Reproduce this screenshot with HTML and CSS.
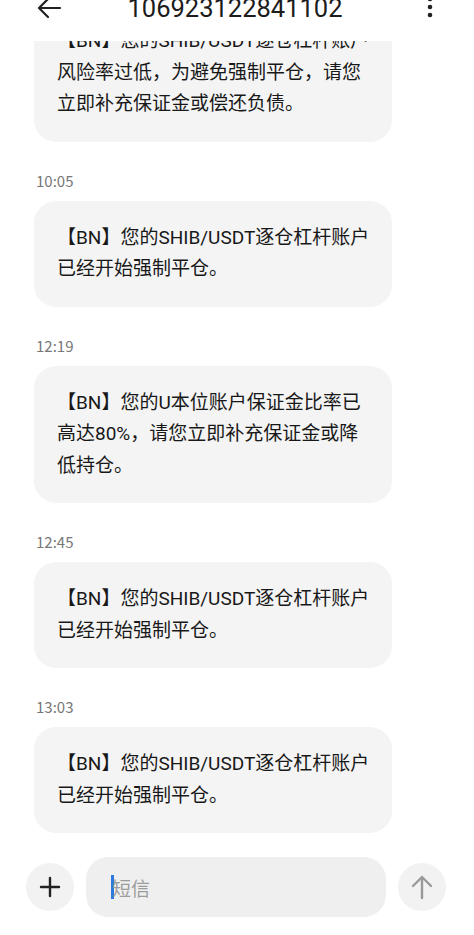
FILE: index.html
```html
<!DOCTYPE html>
<html>
<head>
    <title>106923122841102</title>
    <link rel="stylesheet" href="styles.css">
</head>
<body>
<div class="screen">
    <div class="header">
        <svg class="back-icon" width="26" height="24" viewBox="0 0 26 24">
            <path d="M24 12 H3 M12 3 L3 12 L12 21" fill="none" stroke="#222" stroke-width="2.2" stroke-linecap="round" stroke-linejoin="round"/>
        </svg>
        <div class="title">106923122841102</div>
        <svg class="menu-icon" width="8" height="24" viewBox="0 0 8 24">
            <circle cx="4" cy="2" r="2.3" fill="#222"/>
            <circle cx="4" cy="10" r="2.3" fill="#222"/>
            <circle cx="4" cy="18" r="2.3" fill="#222"/>
        </svg>
    </div>

    <div class="messages">
        <div class="message-list">
            <div class="bubble">【BN】您的SHIB/USDT逐仓杠杆账户<br>风险率过低，为避免强制平仓，请您<br>立即补充保证金或偿还负债。</div>

            <div class="time">10:05</div>
            <div class="bubble">【BN】您的SHIB/USDT逐仓杠杆账户<br>已经开始强制平仓。</div>

            <div class="time">12:19</div>
            <div class="bubble">【BN】您的U本位账户保证金比率已<br>高达80%，请您立即补充保证金或降<br>低持仓。</div>

            <div class="time">12:45</div>
            <div class="bubble">【BN】您的SHIB/USDT逐仓杠杆账户<br>已经开始强制平仓。</div>

            <div class="time">13:03</div>
            <div class="bubble">【BN】您的SHIB/USDT逐仓杠杆账户<br>已经开始强制平仓。</div>
        </div>
    </div>

    <div class="composer">
        <div class="round-btn">
            <svg width="22" height="22" viewBox="0 0 22 22">
                <path d="M11 2 V20 M2 11 H20" stroke="#222" stroke-width="2.4" stroke-linecap="round"/>
            </svg>
        </div>
        <div class="input-box">
            <span class="cursor"></span>
            <span class="placeholder">短信</span>
        </div>
        <div class="round-btn">
            <svg width="24" height="26" viewBox="0 0 24 26">
                <path d="M12 24 V3 M3 12 L12 3 L21 12" fill="none" stroke="#9a9a9a" stroke-width="2.4" stroke-linecap="round" stroke-linejoin="round"/>
            </svg>
        </div>
    </div>
</div>
</body>
</html>
```

FILE: styles.css
```css
body {
    margin: 0;
    padding: 0;
    background-color: #ffffff;
    font-family: "Noto Sans CJK SC", "Noto Sans", sans-serif;
    color: #181818;
}
.screen {
    width: 474px;
    height: 935px;
    display: flex;
    flex-direction: column;
    overflow: hidden;
}
.header {
    height: 41px;
    flex-shrink: 0;
    display: grid;
    grid-template-columns: 1fr auto 1fr;
    align-items: start;
    padding: 0 40px 0 36px;
    background: #ffffff;
    position: relative;
    z-index: 1;
}
.back-icon {
    margin-top: -4px;
}
.title {
    font-family: Roboto, "Noto Sans", sans-serif;
    font-size: 25.5px;
    line-height: 30px;
    margin-top: -7px;
    color: #1c1c1c;
}
.menu-icon {
    margin-top: -3px;
    justify-self: end;
}
.messages {
    flex: 1;
    overflow: hidden;
}
.message-list {
    margin-top: -37px;
    padding-left: 34px;
}
.bubble {
    width: 358px;
    box-sizing: border-box;
    padding: 21px 12px 22px 23px;
    background-color: #f4f4f4;
    border-radius: 22px;
    font-family: Roboto, "Noto Sans CJK SC", sans-serif;
    font-size: 19px;
    line-height: 31.5px;
}
.time {
    height: 20px;
    line-height: 20px;
    margin: 29px 0 10px 2px;
    font-size: 15px;
    color: #777777;
}
.composer {
    flex-shrink: 0;
    display: flex;
    align-items: center;
    gap: 12px;
    padding: 12px 28px 18px 26px;
}
.round-btn {
    width: 48px;
    height: 48px;
    border-radius: 50%;
    background-color: #f2f2f2;
    display: flex;
    align-items: center;
    justify-content: center;
}
.input-box {
    flex: 1;
    height: 60px;
    border-radius: 22px;
    background-color: #efefef;
    display: flex;
    align-items: center;
    padding-left: 25px;
}
.cursor {
    width: 3px;
    height: 24px;
    background-color: #2b78e0;
    margin-right: -2px;
}
.placeholder {
    font-size: 19px;
    color: #9c9c9c;
}
```
